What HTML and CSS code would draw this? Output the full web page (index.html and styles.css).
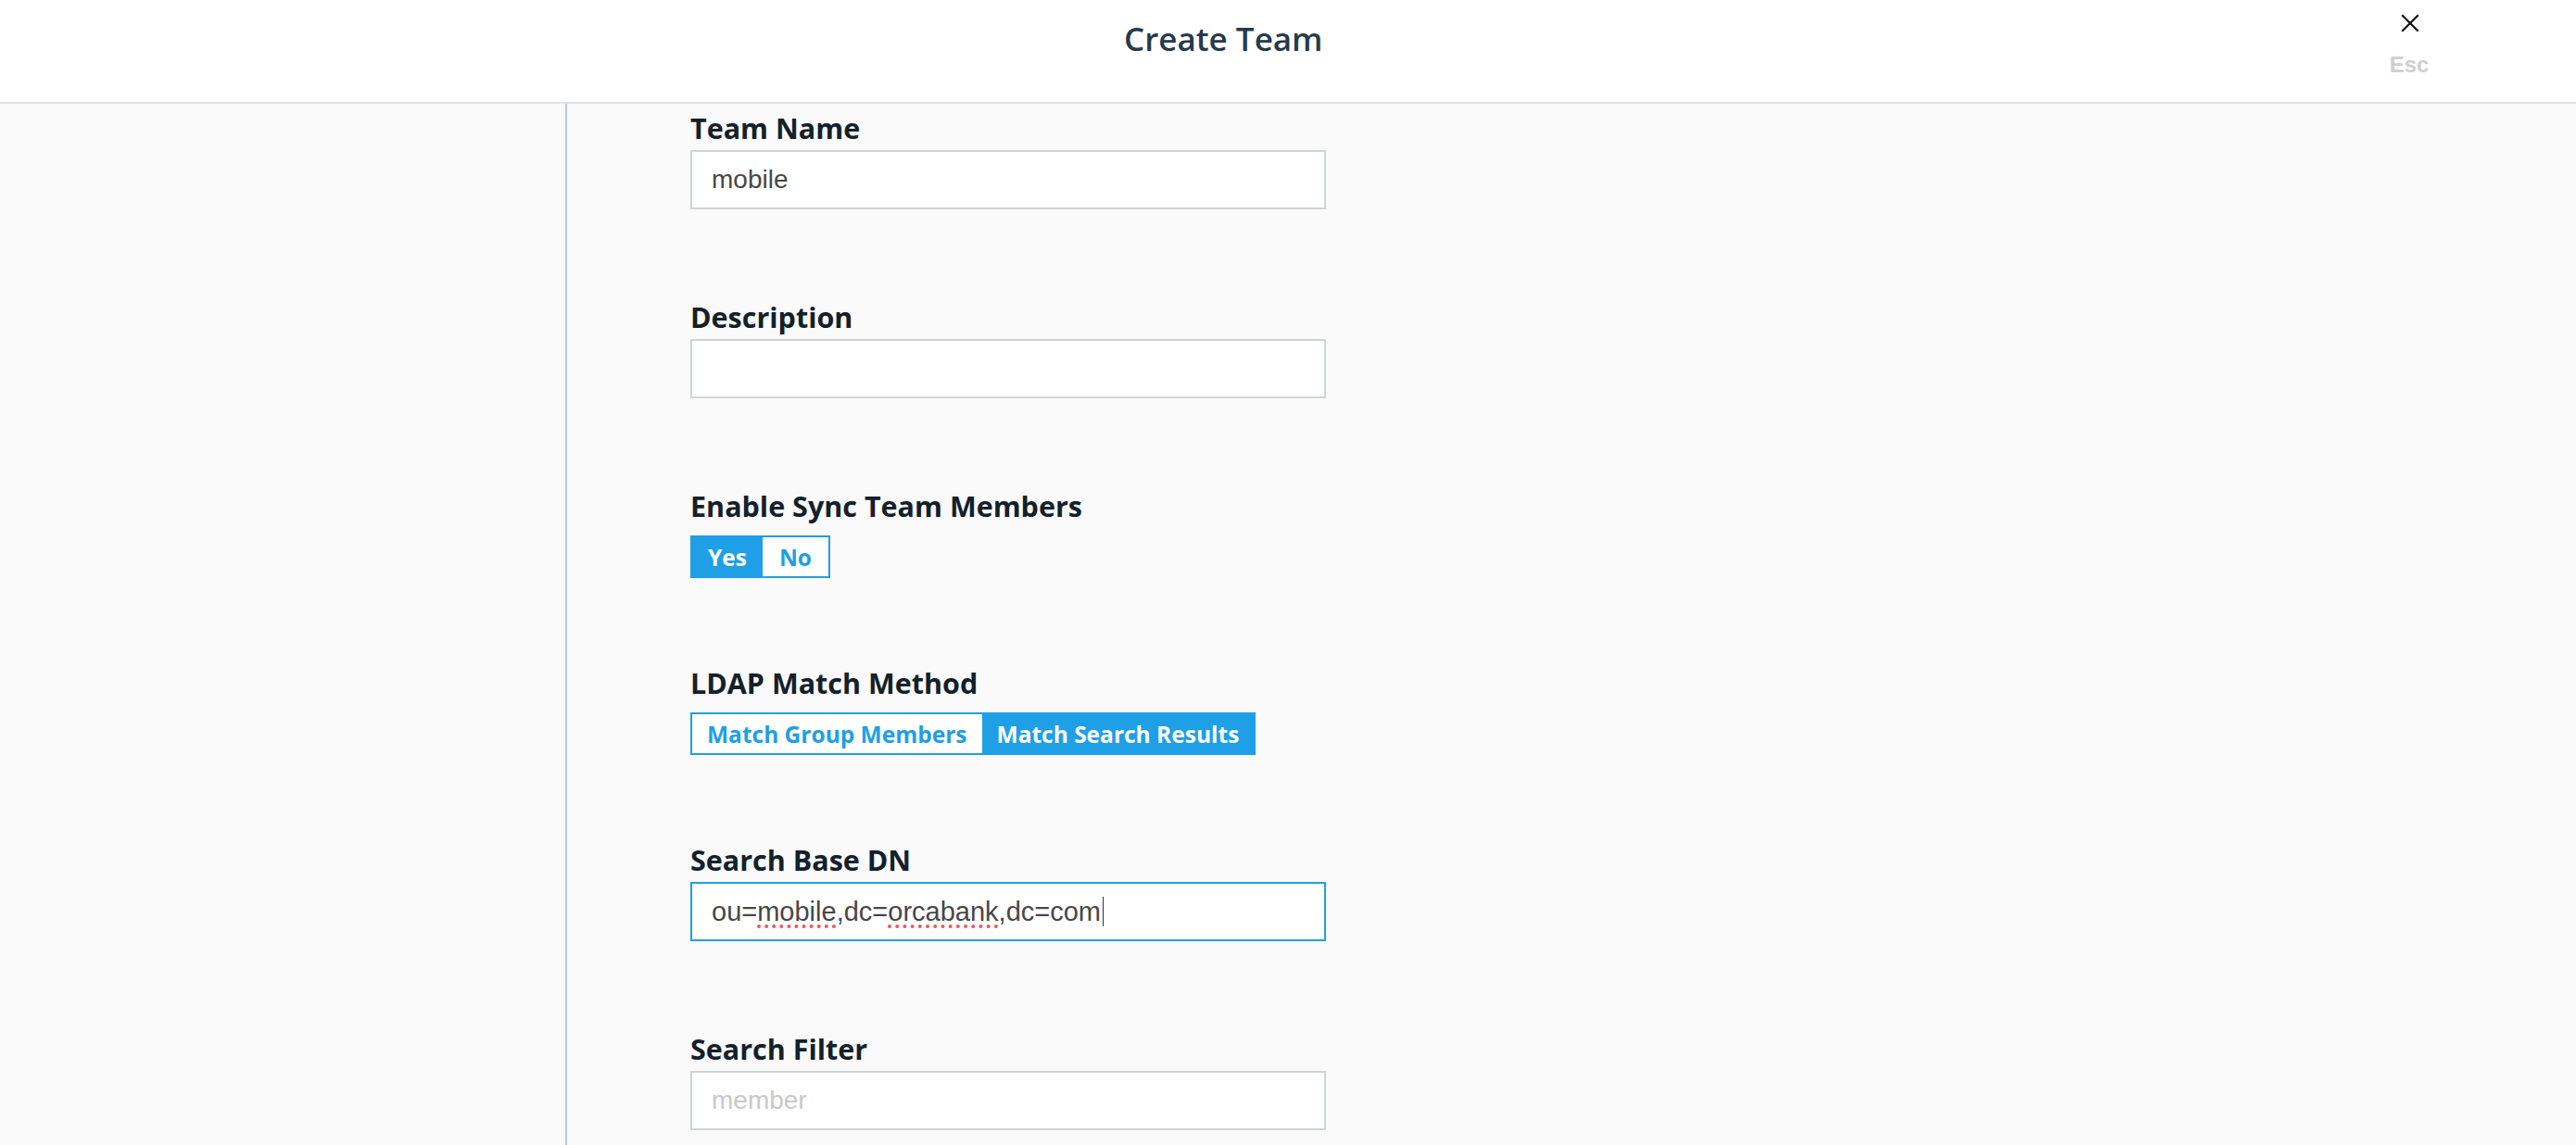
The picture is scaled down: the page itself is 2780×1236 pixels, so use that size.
FILE: index.html
```html
<!DOCTYPE html>
<html lang="en">
<head>
<meta charset="utf-8">
<title>Create Team</title>
<link rel="stylesheet" href="styles.css">
</head>
<body>
<header class="topbar">
  <h1 class="title">Create Team</h1>
  <div class="close">
    <svg class="close-icon" width="20" height="20" viewBox="0 0 20 20" aria-hidden="true">
      <path d="M2 2 L18 18 M18 2 L2 18" stroke="#111" stroke-width="2.2" stroke-linecap="square" fill="none"/>
    </svg>
    <span class="esc">Esc</span>
  </div>
</header>
<div class="content">
  <aside class="sidebar"></aside>
  <main class="form">
    <div class="field">
      <div class="label">Team Name</div>
      <div class="input">mobile</div>
    </div>
    <div class="field">
      <div class="label">Description</div>
      <div class="input"></div>
    </div>
    <div class="field field-toggle">
      <div class="label">Enable Sync Team Members</div>
      <div class="toggle">
        <span class="opt opt-active opt-yes">Yes</span>
        <span class="opt opt-no">No</span>
      </div>
    </div>
    <div class="field field-toggle">
      <div class="label">LDAP Match Method</div>
      <div class="toggle">
        <span class="opt opt-group">Match Group Members</span>
        <span class="opt opt-active opt-search">Match Search Results</span>
      </div>
    </div>
    <div class="field">
      <div class="label">Search Base DN</div>
      <div class="input input-focus input-wide">ou=<span class="spell">mobile</span>,dc=<span class="spell">orcabank</span>,dc=com<span class="caret"></span></div>
    </div>
    <div class="field">
      <div class="label">Search Filter</div>
      <div class="input placeholder">member</div>
    </div>
  </main>
</div>
</body>
</html>
```
FILE: styles.css
```css
html, body {
  margin: 0;
  padding: 0;
}
body {
  width: 2780px;
  height: 1236px;
  overflow: hidden;
  background: #fafafa;
  font-family: "Open Sans", "Liberation Sans", sans-serif;
}
.topbar {
  height: 110px;
  background: #ffffff;
  border-bottom: 2px solid #dfe2e6;
  display: flex;
  align-items: flex-start;
  justify-content: space-between;
  padding-left: 1213px;
  padding-right: 140px;
}
.title {
  margin: 18px 0 0 0;
  font-size: 35px;
  line-height: 48px;
  font-weight: 600;
  color: #253a4a;
}
.close {
  width: 80px;
  margin-top: 15px;
  display: flex;
  flex-direction: column;
  align-items: center;
}
.close-icon {
  display: block;
  margin-left: 2px;
}
.esc {
  margin-top: 22px;
  font-family: "Liberation Sans", Arial, sans-serif;
  font-weight: bold;
  font-size: 24px;
  line-height: 26px;
  color: #cfcfcf;
}
.content {
  display: flex;
  height: 1124px;
}
.sidebar {
  width: 610px;
  border-right: 2px solid #bec7d1;
  flex: none;
}
.form {
  padding-left: 133px;
  padding-top: 6px;
}
.field {
  margin-bottom: 96px;
}
.field-toggle {
  margin-bottom: 93px;
}
.label {
  font-size: 30.5px;
  line-height: 40px;
  font-weight: 700;
  color: #14202a;
  margin-bottom: 4px;
}
.input {
  width: 686px;
  height: 64px;
  box-sizing: border-box;
  border: 2px solid #cfd4d6;
  background: #ffffff;
  padding: 0 21px;
  display: flex;
  align-items: center;
  font-family: "Liberation Sans", Arial, sans-serif;
  font-size: 28px;
  color: #474747;
  white-space: pre;
}
.input-wide {
  font-size: 29px;
}
.input-focus {
  border-color: #1e9fe6;
}
.placeholder {
  color: #c9c9c9;
}
.spell {
  text-decoration: underline dotted #ea5a5a;
  text-decoration-thickness: 4px;
  text-underline-offset: 5px;
}
.caret {
  display: inline-block;
  width: 0;
  height: 32px;
  border-left: 1.5px solid #333;
  margin-left: 2px;
}
.toggle {
  margin-top: 8px;
  display: inline-flex;
  height: 46px;
  box-sizing: border-box;
  border: 2px solid #1e9fe6;
  background: #ffffff;
}
.opt {
  display: flex;
  align-items: center;
  padding: 0 16px;
  font-size: 24.5px;
  font-weight: 700;
  color: #1e9fe6;
}
.opt-yes { padding: 0 17px; }
.opt-no { padding: 0 18px; }
.opt-active {
  background: #1e9fe6;
  color: #ffffff;
}
```
